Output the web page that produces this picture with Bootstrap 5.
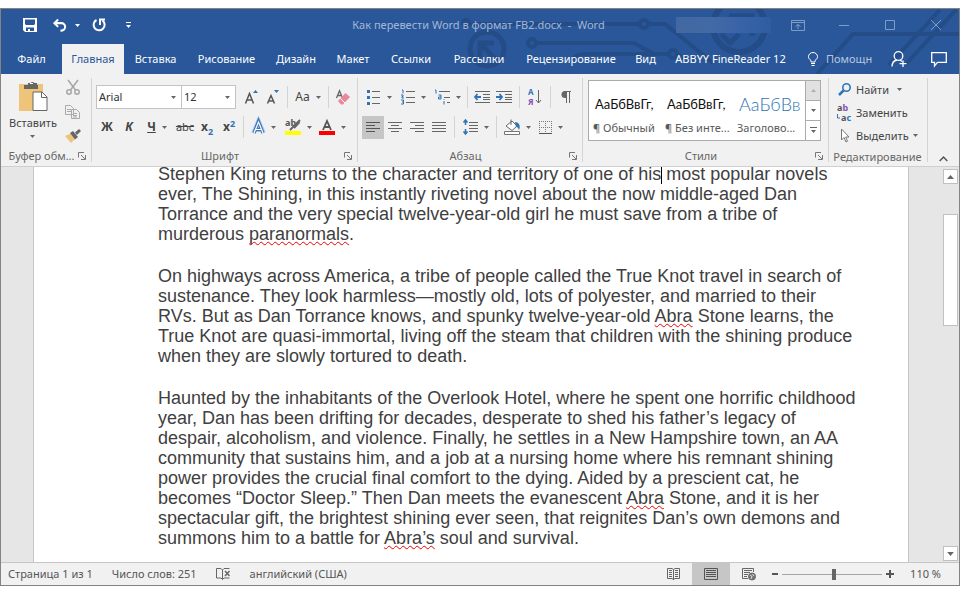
<!DOCTYPE html>
<html lang="ru">
<head>
<meta charset="utf-8">
<meta name="viewport" content="width=device-width, initial-scale=1">
<title>Как перевести Word в формат FB2.docx - Word</title>
<link href="https://cdn.jsdelivr.net/npm/bootstrap@5.3.0/dist/css/bootstrap.min.css" rel="stylesheet">
<style>
  :root { --blue: #2a579a; --ink: #444; --line: #d4d4d4; --ribbon: #f1f1f1; }
  body { font-family: "Noto Sans", "Open Sans", sans-serif; font-size: 11px; line-height: 16px; color: var(--ink); background: #fff; padding: 8px 8px 8px 0; }
  svg { display: block; flex: none; overflow: visible; }
  button, select, input { font: inherit; color: inherit; }
  .app-window { border: 1px solid #838383; }
  .plain { border: 0; background: none; padding: 0; color: inherit; font-size: 11px; line-height: 16px; border-radius: 0; white-space: nowrap; display: flex; align-items: center; justify-content: center; }
  .plain:hover { background: #d5d5d5; }
  .plain.big { font-size: 12px; }
  .app-head { background: var(--blue); color: #fff; height: 65px; overflow: hidden; }
  .app-head .plain:hover { background: #3e6db5; }
  .head-art { position: absolute; top: 0; right: 0; }
  .title-row { height: 35px; padding: 0 0 3px 22px; }
  .doc-title { color: #a3b7d5; padding-left: 150px; }
  .account { width: 95px; height: 16px; background: linear-gradient(90deg, #41689f, #446aa6 35%, #3b65a7 60%, #335fa4 85%, #2f5ba0); }
  .win-btns { color: #7f9cc6; }
  .win-btns .plain { width: 46px; height: 30px; }
  .tabs-grid { display: grid; grid-template-columns: 61px 62px 63px 79px 60px 54px 62px 74px 110px 39px 131px 1fr; height: 30px; }
  .tabs-grid .nav-link { color: #fff; padding: 0; text-align: center; line-height: 30px; font-size: 11px; border: 0; border-radius: 0; white-space: nowrap; }
  .tabs-grid .nav-link.active { background: var(--ribbon); color: var(--blue); }
  .tell { width: 54px; border: 0; padding: 0; background: none; color: #b6c6de; outline: 0; }
  .tell::placeholder { color: #b6c6de; opacity: 1; }
  .ribbon { background: var(--ribbon); height: 93px; border-bottom: 1px solid #cfcfcf; }
  .group-sep { width: 1px; margin: 4px 0; background: var(--line); flex: none; }
  .grp { padding-top: 11px; flex: none; }
  .g-clip { width: 90px; padding-top: 6px; } .g-font { width: 265px; } .g-para { width: 224px; } .g-edit { width: 98px; }
  .clip-tools { gap: 10px; padding-left: 8px; }
  .g-end { width: 31px; }
  .g-style { min-width: 245px; flex: 1 1 245px; padding-top: 6px; }
  .tool-row { height: 24px; display: flex; align-items: center; }
  .tool-row + .tool-row { margin-top: 6px; }
  .tool-row .plain { height: 23px; gap: 6px; flex: none; }
  .w22 { width: 22px; } .w34 { width: 34px; }
  .tool-sep { width: 1px; height: 22px; background: var(--line); flex: none; margin: 0 4px; }
  .tool-sep.tight { margin: 0 3px; }
  .grp-name { color: #666; height: 20px; display: flex; align-items: center; padding: 0 5px 0 4px; }
  .grp-name span { flex: 1; text-align: center; white-space: nowrap; }
  .pick { appearance: none; height: 24px; border: 1px solid #c3c3c3; border-radius: 0; background: #fff url("data:image/svg+xml,%3Csvg xmlns='http://www.w3.org/2000/svg' width='5' height='3'%3E%3Cpath d='M0 0h5L2.5 3z' fill='%23666'/%3E%3C/svg%3E") no-repeat right 5px center; padding: 0 2px; color: #333; }
  .pick-font { width: 86px; } .pick-size { width: 55px; margin-left: -1px; }
  .chosen { background: #c6c6c6; }
  .mini { font-size: 9px; line-height: 9px; color: #2f74b5; }
  .gallery { border: 1px solid #ababab; background: #fff; height: 61px; margin: 0 7px 0 5px; }
  .style-item { flex: 1 1 72px; min-width: 0; overflow: hidden; flex-direction: column; align-items: flex-start; justify-content: flex-end; padding: 0 0 4px 4px; }
  .sample { color: #111; font: 13px/20px Lato, "Noto Sans", sans-serif; padding-left: 2px; margin-bottom: 6px; }
  .sample-head { color: #2e74b5; font-size: 18px; font-weight: 300; }
  .style-label { color: #595959; }
  .gal-scroll { width: 15px; flex: none; border-left: 1px solid #ababab; }
  .gal-scroll .plain { flex: 1; } .gal-scroll .plain + .plain { border-top: 1px solid #ababab; }
  .gal-scroll .plain:disabled { background: #e1e1e1; }
  .edit-tools .plain { height: 23px; justify-content: flex-start; gap: 4px; padding-left: 8px; }
  .doc-area { background: #e6e6e6; min-height: 0; overflow: hidden; }
  .sheet { background: #fff; border: solid #c6c6c6; border-width: 0 1px; margin: 0 34px 0 32px; padding-left: 124px; color: #404040; font: 18px/20px "Liberation Sans", Arial, sans-serif; white-space: nowrap; min-width: 0; }
  .sheet p { margin: 0 0 22px; }
  .sheet p:first-child { margin-top: -3px; }
  .typo { text-decoration: underline wavy #f00000 1px; text-underline-offset: 1px; text-decoration-skip-ink: none; }
  .caret-bar { border-left: 1px solid #000; margin-right: -1px; }
  .scroll-col { width: 15px; padding: 2px 0 1px; margin-right: 1px; }
  .scroll-col .plain, .thumb { border: 1px solid #c0c0c0; background: #fff; }
  .scroll-col .plain { height: 15px; }
  .thumb { height: 112px; margin-top: 30px; }
  .status { background: var(--ribbon); height: 23px; border-top: 1px solid #c6c6c6; color: #555; padding: 0 18px 0 7px; }
  .status .plain { height: 22px; }
  .status .view-btn { width: 38px; }
  .status-info { gap: 19px; }
  .zoom-range { appearance: none; width: 100px; height: 12px; background: linear-gradient(#a6a6a6, #a6a6a6) no-repeat center / 100% 1px; margin: 0 4px; }
  .zoom-range::-webkit-slider-thumb { appearance: none; width: 4px; height: 11px; background: #666; border: 0; }
</style>
<script src="https://cdn.jsdelivr.net/npm/bootstrap@5.3.0/dist/js/bootstrap.bundle.min.js"></script>
</head>
<body class="vh-100 d-flex flex-column">
<svg width="0" height="0" class="position-absolute" aria-hidden="true">
  <symbol id="dd" viewBox="0 0 5 3"><path d="M0 0h5L2.500 3z" fill="#666"/></symbol>
  <symbol id="up" viewBox="0 0 7 4"><path d="M0 4h7L3.500 0z" fill="#666"/></symbol>
  <symbol id="launch" viewBox="0 0 8 8"><path d="M.5 5.500V.5H6M3 3l4 4M7.500 3v4.500H3" fill="none" stroke="#777"/></symbol>
</svg>

<div class="app-window flex-grow-1 d-flex flex-column overflow-hidden">
  <header class="app-head position-relative flex-shrink-0">
    <svg class="head-art" width="520" height="65" viewBox="0 0 520 65" fill="none" stroke="#244c87" stroke-width="4" aria-hidden="true">
      <path d="M30 15h81M111 15H200M209 15h17l48 39M95 34h100l20 11M230 45h-84q-8 0-13 5M238 45l8 5M378 65l36-40h106M501 1L450 56M517 1L466 56"/>
      <circle cx="48" cy="40" r="17" stroke-width="5"/><path d="M41 48V34h14M42 35l14 15" stroke-width="5"/>
      <circle cx="205" cy="15" r="4"/><circle cx="93" cy="34" r="4"/><circle cx="27" cy="14" r="3"/><circle cx="234" cy="45" r="4"/>
      <circle cx="300" cy="17" r="26" stroke-width="6"/><path d="M290 7h23v20M282 25l9 9 9-9" stroke-width="5"/>
    </svg>
    <div class="title-row d-flex align-items-center position-relative">
      <div class="quick d-flex align-items-center">
        <button class="plain" aria-label="Сохранить"><svg width="14" height="14" viewBox="0 0 14 14"><path fill="#fff" fill-rule="evenodd" d="M0 0h14v14H2l-2-2zM2 1.500V6l1 1h8l1-1V1.500zM3 9.500V13h2v-2h2v2h4V9.500z"/></svg></button>
        <button class="plain ms-3" aria-label="Отменить"><svg width="14" height="14" viewBox="0 0 15 14"><path d="M1.500 5H9a4 4 0 0 1 0 8H8M5.500 1L1.500 5l4 4" fill="none" stroke="#fff" stroke-width="2.200"/></svg></button>
        <button class="plain px-1 ms-1" aria-label="Список отмены"><svg width="5" height="3"><path d="M0 0h5L2.500 3z" fill="#fff"/></svg></button>
        <button class="plain ms-1 ps-1" aria-label="Повторить"><svg width="14" height="14" viewBox="0 0 14 14"><path d="M4.500 2A5.500 5.500 0 1 0 10.500 2.500M8 7V1.500h5" fill="none" stroke="#fff" stroke-width="2"/></svg></button>
        <button class="plain ms-3 ps-1" aria-label="Настройка панели"><svg width="5" height="7"><path d="M0 .5h5" stroke="#fff"/><path d="M0 3h5L2.500 6z" fill="#fff"/></svg></button>
      </div>
      <div class="doc-title flex-grow-1 text-center text-nowrap">Как перевести Word в формат FB2.docx &nbsp;- &nbsp;Word</div>
      <div class="account"></div>
      <div class="win-btns d-flex ms-1">
        <button class="plain" aria-label="Параметры ленты"><svg width="14" height="11" fill="none" stroke="currentColor"><path d="M.5.5h13v10H.5zM0 2.500h14M7 9V4.500M4.500 6.500L7 4.500l2.500 2"/></svg></button>
        <button class="plain" aria-label="Свернуть"><svg width="10" height="1"><path d="M0 .5h10" stroke="currentColor"/></svg></button>
        <button class="plain" aria-label="Развернуть"><svg width="10" height="10"><path d="M.5.5h9v9h-9z" fill="none" stroke="currentColor"/></svg></button>
        <button class="plain" aria-label="Закрыть"><svg width="10" height="10"><path d="M0 0l10 10M10 0L0 10" stroke="currentColor"/></svg></button>
      </div>
    </div>
    <nav class="tabs-grid position-relative">
      <a class="nav-link" href="#">Файл</a><a class="nav-link active" href="#" aria-current="page">Главная</a><a class="nav-link" href="#">Вставка</a><a class="nav-link" href="#">Рисование</a><a class="nav-link" href="#">Дизайн</a><a class="nav-link" href="#">Макет</a><a class="nav-link" href="#">Ссылки</a><a class="nav-link" href="#">Рассылки</a><a class="nav-link" href="#">Рецензирование</a><a class="nav-link" href="#">Вид</a><a class="nav-link" href="#">ABBYY FineReader 12</a>
      <div class="d-flex align-items-center ps-2 pe-2">
        <label for="tell" class="ps-1 pe-2" aria-label="Помощник"><svg width="10" height="14" viewBox="0 0 10 14" fill="none" stroke="#fff"><path d="M3 10V8.500C1.500 7.500.5 6.300.5 4.700a4.500 4.200 0 0 1 9 0C9.500 6.300 8.500 7.500 7 8.500V10zM3 11.500h4M3.500 13.500h3"/></svg></label>
        <input id="tell" class="tell" type="text" placeholder="Помощн">
        <div class="d-flex align-items-center ms-auto pe-1 gap-4">
          <button class="plain" aria-label="Общий доступ"><svg width="16" height="16" viewBox="0 0 16 16" fill="none" stroke="#fff" stroke-width="1.300"><circle cx="7.500" cy="5" r="4.300"/><path d="M1 15.500c0-4 2.500-6 5-6.500M9 9l2 1.500M12 9.500V16M8.500 12.700h7"/></svg></button>
          <button class="plain" aria-label="Примечания"><svg width="16" height="15" fill="none" stroke="#fff" stroke-width="1.300"><path d="M.7.7h14.600v9.600H6.500L3.500 14v-3.700H.7z"/></svg></button>
        </div>
      </div>
    </nav>
  </header>

  <section class="ribbon d-flex flex-shrink-0" aria-label="Главная">
    <div class="grp g-clip d-flex flex-column">
      <div class="d-flex ps-1">
        <button class="plain flex-column justify-content-start ps-1" aria-label="Вставить">
          <svg width="28" height="31" viewBox="0 0 28 31"><path d="M0 4h24v27H0z" fill="#eec47b"/><path d="M5 5h4V3h2.500a2.500 2.500 0 0 1 4 0H18v2h1v4H5z" fill="#666"/><path d="M11 3.500h3" stroke="#fff"/><path d="M14 12h9l5 5v13.500H14z" fill="#fff" stroke="#666"/><path d="M22.500 12v5.500H28" fill="none" stroke="#666"/></svg>
          <span class="mt-1">Вставить</span>
          <svg class="mt-1" width="5" height="3"><use href="#dd"/></svg>
        </button>
        <div class="clip-tools d-flex flex-column">
          <button class="plain" aria-label="Вырезать"><svg width="14" height="15" viewBox="0 0 14 15" fill="none" stroke="#a6a6a6" stroke-width="1.500"><path d="M2 0l7.500 10M12 0L4.500 10"/><circle cx="3" cy="12" r="2.200"/><circle cx="11" cy="12" r="2.200"/></svg></button>
          <button class="plain" aria-label="Копировать"><svg width="15" height="14" viewBox="0 0 15 14" stroke="#aaa" fill="#f1f1f1"><path d="M.5.5h5l3 3v6h-8zM2 4.500h4M2 6.500h4M6.500 4.500h5l3 3v6h-8zM8 8.500h4M8 10.500h4M8 12h4"/></svg></button>
          <button class="plain" aria-label="Формат по образцу"><svg width="16" height="14" viewBox="0 0 16 14"><path d="M0 7l6-2.500 4 5.500-4 4z" fill="#eec47b"/><path d="M5 4l3-2 5 6-3 2.500z" fill="#666"/><path d="M10 3.500L14 0l2 2-4 4z" fill="#666"/></svg></button>
        </div>
      </div>
      <div class="grp-name mt-auto"><span>Буфер обм...</span><svg width="8" height="8"><use href="#launch"/></svg></div>
    </div>
    <div class="group-sep"></div>

    <div class="grp g-font d-flex flex-column">
      <div class="tool-row ps-1">
        <select class="pick pick-font" aria-label="Шрифт"><option>Arial</option></select>
        <select class="pick pick-size" aria-label="Размер шрифта"><option>12</option></select>
        <button class="plain w22 ms-1" aria-label="Увеличить размер"><svg width="13" height="14" viewBox="0 0 13 14"><path d="M.5 13.500L4.500 3.500l4 10M2 10h5" fill="none" stroke="#555" stroke-width="1.500"/><path d="M8 3h5l-2.500-3z" fill="#2f74b5"/></svg></button>
        <button class="plain w22" aria-label="Уменьшить размер"><svg width="12" height="14" viewBox="0 0 12 14"><path d="M.5 13.500L4 5.500l3.500 8M2 11h4" fill="none" stroke="#555" stroke-width="1.500"/><path d="M7 0h5L9.500 3z" fill="#2f74b5"/></svg></button>
        <div class="tool-sep tight"></div>
        <button class="plain big w34" aria-label="Регистр">Aa<svg width="5" height="3"><use href="#dd"/></svg></button>
        <div class="tool-sep tight"></div>
        <button class="plain w22" aria-label="Очистить формат"><svg width="14" height="15" viewBox="0 0 14 15"><path d="M.5 8L3.500.8 6.500 8M1.500 5.500h4" fill="none" stroke="#666" stroke-width="1.300"/><path d="M9.500 3L14 7l-7 7.500H5L2 11z" fill="#e8899a"/><path d="M4.500 8.500L9 13" stroke="#fff"/></svg></button>
      </div>
      <div class="tool-row ps-1">
        <button class="plain big w22 fw-bold">Ж</button>
        <button class="plain big w22 fw-bold fst-italic">К</button>
        <button class="plain big w34"><b class="text-decoration-underline">Ч</b><svg width="5" height="3"><use href="#dd"/></svg></button>
        <button class="plain w22 text-decoration-line-through">abc</button>
        <button class="plain big w22 gap-0 fw-bold">x<span class="mini mt-2">2</span></button>
        <button class="plain big w22 gap-0 fw-bold">x<span class="mini mb-2">2</span></button>
        <div class="tool-sep tight"></div>
        <button class="plain w34" aria-label="Эффекты текста"><svg width="13" height="14" viewBox="0 0 13 14"><path d="M1.500 13L6.500 1.500 11.500 13M3.500 9.500h6" fill="none" stroke="#bcd3ec" stroke-width="5"/><path d="M2 13L6.500 1.500 11 13M3.500 9.500h6" fill="none" stroke="#3e78b8" stroke-width="3.400"/><path d="M2 13L6.500 2 11 13M4 9.500h5" fill="none" stroke="#fff" stroke-width="1.200"/></svg><svg width="5" height="3"><use href="#dd"/></svg></button>
        <button class="plain w34" aria-label="Цвет выделения"><svg width="16" height="16" viewBox="0 0 16 16"><text x="0" y="7" font-size="9" font-weight="bold" fill="#555">ab</text><path d="M15 1L8 8l-3 3M14.500 3L9 9" stroke="#666" stroke-width="2"/><path d="M0 12h16v4H0z" fill="#ff0"/></svg><svg width="5" height="3"><use href="#dd"/></svg></button>
        <button class="plain w34" aria-label="Цвет текста"><svg width="16" height="15" viewBox="0 0 16 15"><path d="M4 10L8 1l4 9M5.500 7h5" fill="none" stroke="#555" stroke-width="1.800"/><path d="M0 11h16v4H0z" fill="red"/></svg><svg width="5" height="3"><use href="#dd"/></svg></button>
      </div>
      <div class="grp-name mt-auto"><span>Шрифт</span><svg width="8" height="8"><use href="#launch"/></svg></div>
    </div>
    <div class="group-sep"></div>

    <div class="grp g-para d-flex flex-column">
      <div class="tool-row ps-1">
        <button class="plain w34" aria-label="Маркеры"><svg width="14" height="15" viewBox="0 0 14 15"><path d="M0 0h3v3H0zM0 6h3v3H0zM0 12h3v3H0z" fill="#2f74b5"/><path d="M5 1.500h8M5 7.500h8M5 13.500h8" stroke="#666"/></svg><svg width="5" height="3"><use href="#dd"/></svg></button>
        <button class="plain w34" aria-label="Нумерация"><svg width="14" height="16" viewBox="0 0 14 16"><path d="M1 1h1v3.500M0 6h2v1.500H1V9h2M0 11h2.500v4H0M1 13h1.500" fill="none" stroke="#2f74b5"/><path d="M5 2.500h9M5 8.500h9M5 13.500h9" stroke="#666"/></svg><svg width="5" height="3"><use href="#dd"/></svg></button>
        <button class="plain w34" aria-label="Многоуровневый список"><svg width="16" height="16" viewBox="0 0 16 16"><path d="M1 1h1v3.500M4.500 6H7v4H4.500V8H7M10 10v.8M10 12v3.500" fill="none" stroke="#2f74b5"/><path d="M5 2.500h11M10 8.500h6M13 13.500h3" stroke="#666"/></svg><svg width="5" height="3"><use href="#dd"/></svg></button>
        <div class="tool-sep tight"></div>
        <button class="plain w22" aria-label="Уменьшить отступ"><svg width="16" height="12" viewBox="0 0 16 12"><path d="M1 .5h15M9 3.500h7M9 6.500h7M9 8.500h7M1 11.500h15" stroke="#666"/><path d="M7 6H1M3.500 3L1 6l2.500 3" fill="none" stroke="#2f74b5" stroke-width="1.800"/></svg></button>
        <button class="plain w22" aria-label="Увеличить отступ"><svg width="16" height="12" viewBox="0 0 16 12"><path d="M0 .5h16M9 3.500h7M9 6.500h7M9 8.500h7M0 11.500h16" stroke="#666"/><path d="M0 6h6M3.500 3L6 6 3.500 9" fill="none" stroke="#2f74b5" stroke-width="1.800"/></svg></button>
        <div class="tool-sep"></div>
        <button class="plain w22" aria-label="Сортировка"><svg width="14" height="18" viewBox="0 0 14 18"><text x="0" y="7" font-size="8" font-weight="bold" fill="#2f74b5">А</text><text x="0" y="17" font-size="8" font-weight="bold" fill="#8a4fb0">Я</text><path d="M10.500 2v13M8 12l2.500 3 2.500-3" fill="none" stroke="#666"/></svg></button>
        <div class="tool-sep"></div>
        <button class="plain w22" aria-label="Знаки абзаца"><svg width="10" height="12" viewBox="0 0 10 12"><path d="M5 0v7H4A3.500 3.500 0 0 1 4 0z" fill="#666"/><path d="M3 .5h7M5.500 0v12M8.500 0v12" stroke="#666"/></svg></button>
      </div>
      <div class="tool-row ps-1">
        <button class="plain w22 chosen" aria-label="По левому краю"><svg width="14" height="10" stroke="#555"><path d="M0 .5h14M0 3.500h9M0 6.500h14M0 9.500h9"/></svg></button>
        <button class="plain w22" aria-label="По центру"><svg width="14" height="10" stroke="#666"><path d="M0 .5h14M3 3.500h8M0 6.500h14M3 9.500h8"/></svg></button>
        <button class="plain w22" aria-label="По правому краю"><svg width="14" height="10" stroke="#666"><path d="M0 .5h14M5 3.500h9M0 6.500h14M5 9.500h9"/></svg></button>
        <button class="plain w22" aria-label="По ширине"><svg width="14" height="10" stroke="#666"><path d="M0 .5h14M0 3.500h14M0 6.500h14M0 9.500h14"/></svg></button>
        <div class="tool-sep"></div>
        <button class="plain w34" aria-label="Интервал"><svg width="15" height="16" viewBox="0 0 15 16"><path d="M2.500 1v5M.5 3.500l2-2.500 2 2.500M2.500 10v5M.5 12.500l2 2.500 2-2.500" fill="none" stroke="#2f74b5" stroke-width="1.500"/><path d="M6 3.500h9M6 6.500h9M6 9.500h9M6 12.500h9" stroke="#666"/></svg><svg width="5" height="3"><use href="#dd"/></svg></button>
        <div class="tool-sep tight"></div>
        <button class="plain w34" aria-label="Заливка"><svg width="16" height="16" viewBox="0 0 16 16"><path d="M2 7l6-5 5 5-5 4.500z" fill="#fff" stroke="#666"/><path d="M7 6V.5" stroke="#666"/><path d="M11 3c4 0 6 4 4 8-1-3-2-3-3-3z" fill="#2f74b5"/><path d="M.5 12.500h15v3H.5z" fill="#fff" stroke="#777"/></svg><svg width="5" height="3"><use href="#dd"/></svg></button>
        <button class="plain w34" aria-label="Границы"><svg width="13" height="13" viewBox="0 0 13 13"><path d="M0 .5h13M0 6.500h13M.5 0v13M6.500 0v13M12.500 0v13" stroke="#777" stroke-dasharray="1 1"/><path d="M0 12.500h13" stroke="#555"/></svg><svg width="5" height="3"><use href="#dd"/></svg></button>
      </div>
      <div class="grp-name mt-auto"><span>Абзац</span><svg width="8" height="8"><use href="#launch"/></svg></div>
    </div>
    <div class="group-sep"></div>

    <div class="grp g-style d-flex flex-column">
      <div class="gallery d-flex">
        <button class="plain style-item"><span class="sample">АаБбВвГг,</span><span class="style-label">¶ Обычный</span></button>
        <button class="plain style-item"><span class="sample">АаБбВвГг,</span><span class="style-label">¶ Без инте...</span></button>
        <button class="plain style-item"><span class="sample sample-head">АаБбВв</span><span class="style-label">Заголово...</span></button>
        <div class="gal-scroll d-flex flex-column">
          <button class="plain" aria-label="Вверх" disabled><svg width="5" height="3" opacity=".4"><use href="#up"/></svg></button>
          <button class="plain" aria-label="Вниз"><svg width="5" height="3"><use href="#dd"/></svg></button>
          <button class="plain" aria-label="Все стили"><svg width="7" height="7"><path d="M0 .5h7" stroke="#666"/><path d="M1 3h5L3.500 6z" fill="#666"/></svg></button>
        </div>
      </div>
      <div class="grp-name mt-auto"><span>Стили</span><svg width="8" height="8"><use href="#launch"/></svg></div>
    </div>
    <div class="group-sep"></div>

    <div class="grp g-edit d-flex flex-column pt-1">
      <div class="edit-tools d-flex flex-column align-items-start">
        <button class="plain"><svg width="15" height="13" viewBox="0 0 15 13" fill="none"><circle cx="9.500" cy="4.500" r="3.700" stroke="#2f74b5" stroke-width="1.600"/><path d="M6.500 7.500L2 12" stroke="#2f74b5" stroke-width="2.500"/></svg>Найти<svg class="ms-1" width="5" height="3"><use href="#dd"/></svg></button>
        <button class="plain"><svg width="15" height="18" viewBox="0 0 15 18" font-size="9" font-weight="bold"><text x="0" y="7" fill="#555">a<tspan fill="#8a4fb0">b</tspan></text><text x="4" y="17" fill="#555">a<tspan fill="#2f74b5">c</tspan></text><path d="M.5 10v4H3" fill="none" stroke="#2f74b5"/></svg>Заменить</button>
        <button class="plain"><svg width="15" height="15" viewBox="0 0 15 15"><path d="M4.500 1v11l2.500-2.500L9 14l1.500-.8L8.700 9H12z" fill="#fff" stroke="#777"/></svg>Выделить<svg width="5" height="3"><use href="#dd"/></svg></button>
      </div>
      <div class="grp-name mt-auto"><span>Редактирование</span></div>
    </div>
    <div class="group-sep"></div>
    <div class="g-end d-flex align-items-end justify-content-center pb-1">
      <button class="plain" aria-label="Свернуть ленту"><svg width="9" height="6"><path d="M.7 5l3.800-4 3.800 4" fill="none" stroke="#555" stroke-width="1.500"/></svg></button>
    </div>
  </section>

  <div class="doc-area d-flex flex-grow-1">
    <main class="sheet flex-grow-1 overflow-hidden">
      <p>Stephen King returns to the character and territory of one of his<span class="caret-bar"></span> most popular novels<br>ever, The Shining, in this instantly riveting novel about the now middle-aged Dan<br>Torrance and the very special twelve-year-old girl he must save from a tribe of<br>murderous <span class="typo">paranormals</span>.</p>
      <p>On highways across America, a tribe of people called the True Knot travel in search of<br>sustenance. They look harmless—mostly old, lots of polyester, and married to their<br>RVs. But as Dan Torrance knows, and spunky twelve-year-old <span class="typo">Abra</span> Stone learns, the<br>True Knot are quasi-immortal, living off the steam that children with the shining produce<br>when they are slowly tortured to death.</p>
      <p>Haunted by the inhabitants of the Overlook Hotel, where he spent one horrific childhood<br>year, Dan has been drifting for decades, desperate to shed his father’s legacy of<br>despair, alcoholism, and violence. Finally, he settles in a New Hampshire town, an AA<br>community that sustains him, and a job at a nursing home where his remnant shining<br>power provides the crucial final comfort to the dying. Aided by a prescient cat, he<br>becomes “Doctor Sleep.” Then Dan meets the evanescent <span class="typo">Abra</span> Stone, and it is her<br>spectacular gift, the brightest shining ever seen, that reignites Dan’s own demons and<br>summons him to a battle for <span class="typo">Abra’s</span> soul and survival.</p>
    </main>
    <div class="scroll-col d-flex flex-column flex-shrink-0">
      <button class="plain" aria-label="Прокрутить вверх"><svg width="7" height="4"><use href="#up"/></svg></button>
      <div class="thumb"></div>
      <button class="plain mt-auto" aria-label="Прокрутить вниз"><svg width="7" height="4"><use href="#dd"/></svg></button>
    </div>
  </div>

  <footer class="status d-flex align-items-center flex-shrink-0">
    <div class="status-info d-flex">
      <button class="plain">Страница 1 из 1</button>
      <button class="plain">Число слов: 251</button>
      <button class="plain" aria-label="Проверка правописания"><svg width="15" height="12" viewBox="0 0 15 12" fill="none" stroke="#666"><path d="M6.500 11.500L5 10H.5V.5H5L6.500 2zM6.500 2L8 .5h5.500M8 10l-1.500 1.500M8 10h5.500"/><path d="M9 3l4.500 5M13.500 3L9 8" stroke-width="1.500"/></svg></button>
      <button class="plain">английский (США)</button>
    </div>
    <div class="d-flex align-items-center ms-auto">
      <button class="plain view-btn" aria-label="Режим чтения"><svg width="13" height="12" viewBox="0 0 13 12" fill="none" stroke="#666"><path d="M6.500 12V1.500L5 .5H.5v10H5l1.500 1 1.500-1h4.500V.5H8l-1.500 1M2 2.500h3M2 4.500h3M2 6.500h3M2 8.500h3M8 2.500h3M8 4.500h3M8 6.500h3M8 8.500h3"/></svg></button>
      <button class="plain view-btn chosen" aria-label="Разметка страницы"><svg width="14" height="12" fill="none" stroke="#555"><path d="M.5.5h13v11H.5zM2 2.500h10M2 4.500h10M2 6.500h10M2 8.500h10"/></svg></button>
      <button class="plain view-btn" aria-label="Веб-документ"><svg width="14" height="13" viewBox="0 0 14 13" fill="none" stroke="#666"><path d="M6 10.500H.5V.5h11V4M2 2.500h8M2 4.500h6M2 6.500h4M2 8.500h3"/><circle cx="10" cy="8.500" r="3.500" fill="#777"/><path d="M8 7l2 1.500L9 11M10.500 6L12 8" stroke="#ddd"/></svg></button>
      <button class="plain ms-1" aria-label="Уменьшить"><svg width="6" height="2"><path d="M0 1h6" stroke="#555" stroke-width="2"/></svg></button>
      <input class="zoom-range" type="range" min="0" max="100" value="52" aria-label="Масштаб">
      <button class="plain" aria-label="Увеличить"><svg width="8" height="8"><path d="M0 4h8M4 0v8" stroke="#555" stroke-width="2"/></svg></button>
      <button class="plain ms-3">110 %</button>
    </div>
  </footer>
</div>
</body>
</html>
